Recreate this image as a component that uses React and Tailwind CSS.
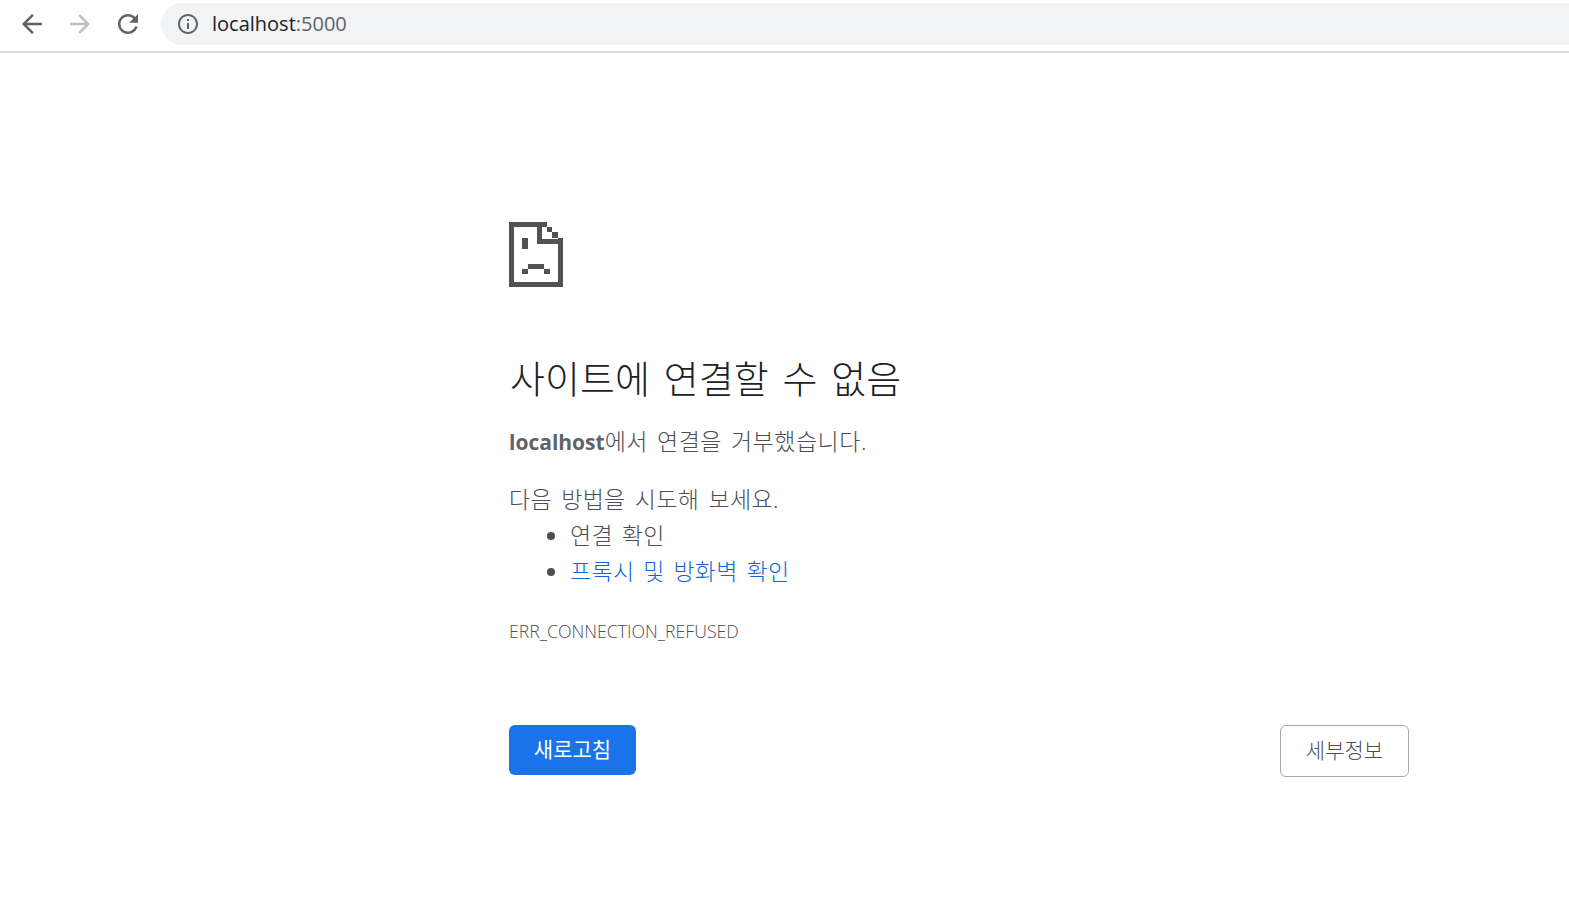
import React from "react";

const BackIcon = ({ className }) => (
  <svg viewBox="0 0 24 24" className={className} fill="currentColor">
    <path d="M20 11H7.83l5.59-5.59L12 4l-8 8 8 8 1.41-1.41L7.83 13H20v-2z" />
  </svg>
);

const ReloadIcon = ({ className }) => (
  <svg viewBox="0 0 24 24" className={className} fill="currentColor">
    <path d="M17.65 6.35C16.2 4.9 14.21 4 12 4c-4.42 0-7.99 3.58-7.99 8s3.57 8 7.99 8c3.73 0 6.84-2.55 7.73-6h-2.08c-.82 2.33-3.04 4-5.65 4-3.31 0-6-2.69-6-6s2.69-6 6-6c1.66 0 3.14.69 4.22 1.78L13 11h7V4l-2.35 2.35z" />
  </svg>
);

const InfoIcon = ({ className }) => (
  <svg viewBox="0 0 24 24" className={className} fill="currentColor">
    <path d="M11 7h2v2h-2zm0 4h2v6h-2zm1-9C6.48 2 2 6.48 2 12s4.48 10 10 10 10-4.48 10-10S17.52 2 12 2zm0 18c-4.41 0-8-3.59-8-8s3.59-8 8-8 8 3.59 8 8-3.59 8-8 8z" />
  </svg>
);

// sad page icon, pixel art
const SadPage = () => (
  <svg viewBox="0 0 54 65" className="w-[54px] h-[65px] block" fill="#525252">
    <rect x="0" y="0" width="38" height="5" />
    <rect x="0" y="0" width="5" height="65" />
    <rect x="0" y="60" width="54" height="5" />
    <rect x="49" y="16" width="5" height="49" />
    <rect x="28" y="0" width="5" height="22" />
    <rect x="28" y="17" width="26" height="5" />
    <rect x="38" y="5" width="5" height="5" />
    <rect x="43" y="10" width="6" height="6" />
    <rect x="13" y="16" width="6" height="11" />
    <rect x="19" y="42" width="16" height="5" />
    <rect x="13" y="47" width="6" height="5" />
    <rect x="35" y="47" width="6" height="5" />
  </svg>
);

const font = "font-['Open_Sans','Noto_Sans_CJK_KR',sans-serif]";

const App = () => {
  return (
    <div className={`min-h-[907px] bg-white overflow-hidden ${font}`}>
      {/* Browser toolbar */}
      <div className="h-[53px] border-b-2 border-[#dcdcdc] flex items-start pt-[3px] pl-[17px]">
        <div className="flex items-center h-[42px] gap-[18px]">
          <BackIcon className="w-[30px] h-[30px] text-[#5f6368]" />
          <BackIcon className="w-[30px] h-[30px] text-[#bcbfc3] rotate-180" />
          <ReloadIcon className="w-[30px] h-[30px] text-[#5f6368]" />
        </div>
        <div className="ml-[18px] flex-1 h-[42px] bg-[#f1f3f4] rounded-l-full flex items-center pl-[15px]">
          <InfoIcon className="w-6 h-6 text-[#5f6368]" />
          <span className="ml-[12px] text-[20px] text-[#5f6368]">
            <span className="text-[#202124]">localhost</span>:5000
          </span>
        </div>
      </div>

      {/* Error page */}
      <div className="ml-[509px] w-[899px] pt-[169px] text-[#4b4e53]">
        <SadPage />
        <h1 className="mt-[66px] pl-px text-[38px] leading-[50px] font-light [word-spacing:4px] text-[#202124]">
          사이트에 연결할 수 없음
        </h1>
        <p className="mt-[20px] text-[23px] leading-[36px] font-light tracking-[0.5px] [word-spacing:2.5px]">
          <b className="font-bold text-[21px] tracking-normal text-[#5f6368]">localhost</b>에서 연결을 거부했습니다.
        </p>
        <p className="mt-[21px] text-[23px] leading-[36px] font-light tracking-[0.3px] [word-spacing:3px]">
          다음 방법을 시도해 보세요.
        </p>
        <ul className="list-disc pl-[61px] text-[23px] leading-[36px] font-light tracking-[0.3px] [word-spacing:2.5px]">
          <li>연결 확인</li>
          <li>
            <a className="text-[#0f66dc]">프록시 및 방화벽 확인</a>
          </li>
        </ul>
        <div className="mt-[30px] text-[17.7px] leading-[24px] font-light">ERR_CONNECTION_REFUSED</div>
        <div className="mt-[82px] flex justify-between items-start w-[900px]">
          <button className="w-[127px] h-[50px] rounded-[6px] bg-[#1a73e8] text-white text-[21px]">
            새로고침
          </button>
          <button className="w-[129px] h-[52px] rounded-[6px] border border-[#a8a8a8] text-[#4b4e53] text-[21px] font-light">
            세부정보
          </button>
        </div>
      </div>
    </div>
  );
};

export default App;
